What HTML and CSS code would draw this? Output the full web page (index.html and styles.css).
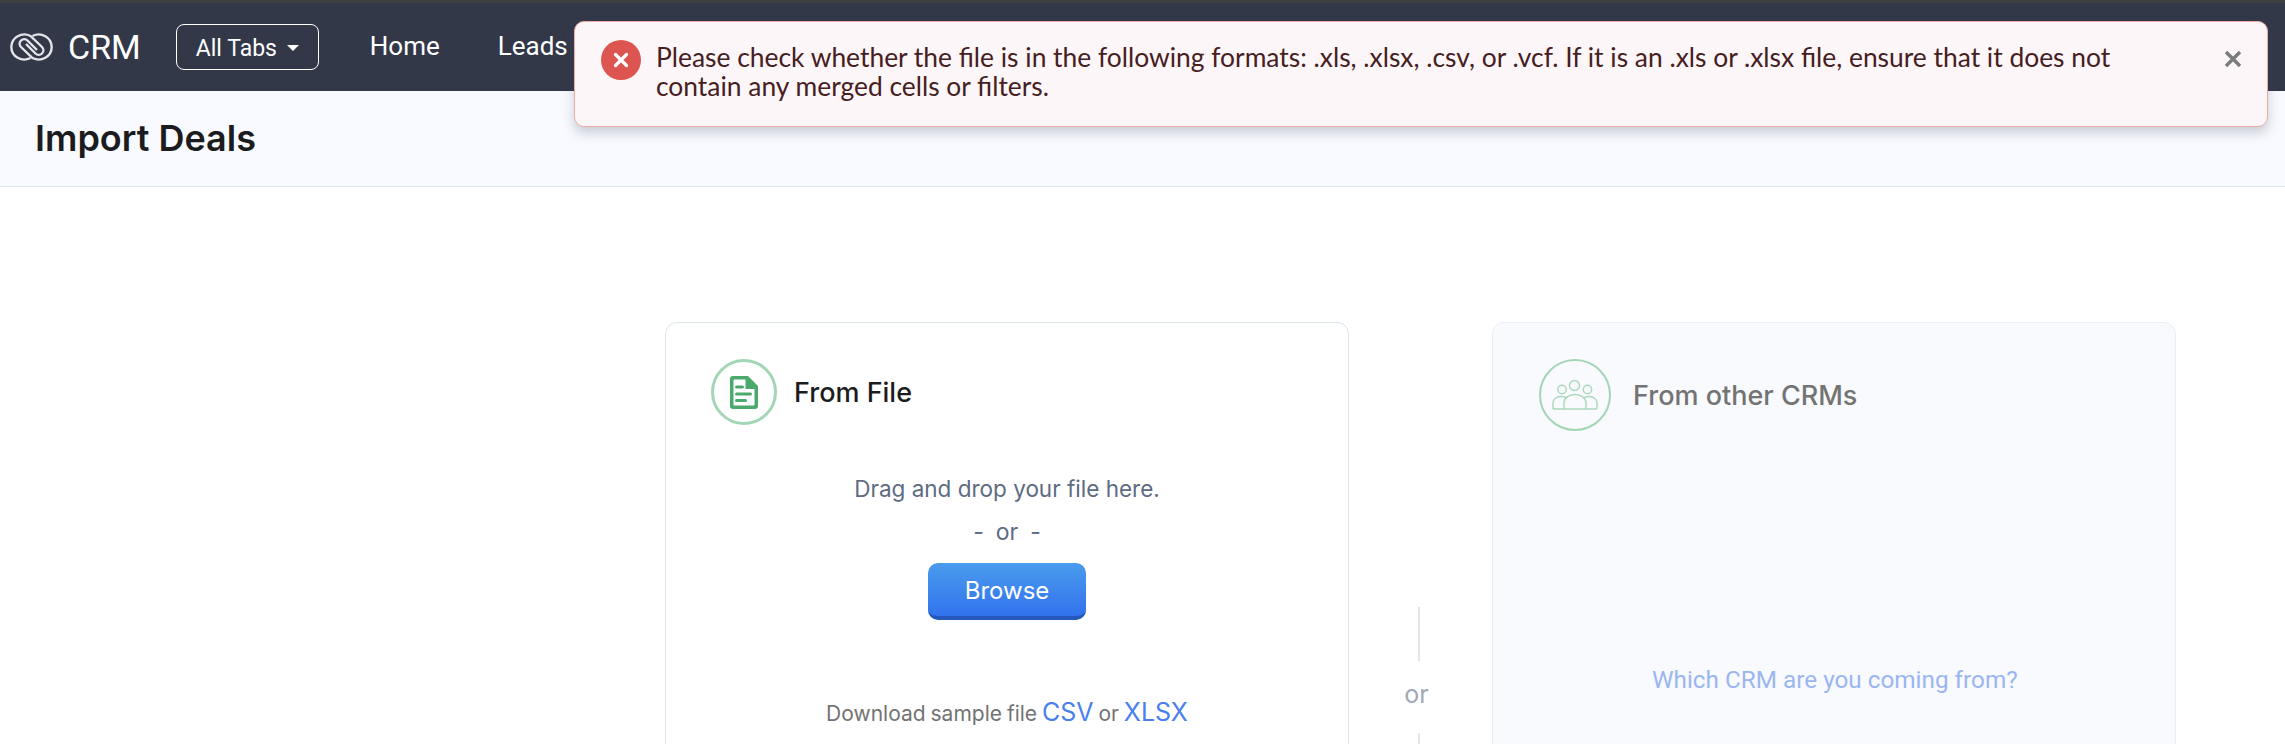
FILE: index.html
```html
<!DOCTYPE html>
<html lang="en">

<head>
    <meta charset="UTF-8">
    <title>Import Deals</title>
    <link rel="stylesheet" href="styles.css">
</head>

<body>
    <nav class="topbar">
        <svg class="logo" viewBox="0 0 43 28" width="43" height="28" fill="none" stroke="#e4e5e8" stroke-width="2.4">
            <path d="M20.5 25a13 12.5 0 1 1 0-22L32 14a4.5 4.5 0 0 1-6.5 6.5L16 11" />
            <path d="M22.5 3a13 12.5 0 1 1 0 22L11 14a4.5 4.5 0 0 1 6.5-6.5L27 17" />
        </svg>
        <span class="brand">CRM</span>
        <button class="all-tabs">All Tabs <span class="caret"></span></button>
        <a class="nav-link" href="#">Home</a>
        <a class="nav-link" href="#">Leads</a>
    </nav>

    <header class="page-head">
        <h1>Import Deals</h1>
    </header>

    <!-- error toast sits over the nav and header -->
    <div class="toast">
        <span class="toast-icon">
            <svg viewBox="0 0 16 16" width="16" height="16" stroke="#fff" stroke-width="3.2" stroke-linecap="round">
                <path d="M2.5 2.5l11 11M13.5 2.5l-11 11" />
            </svg>
        </span>
        <p>Please check whether the file is in the following formats: .xls, .xlsx, .csv, or .vcf. If it is an .xls or .xlsx file, ensure that it does not contain any merged cells or filters.</p>
        <svg class="toast-close" viewBox="0 0 18 18" width="18" height="18" stroke="#7b7b7b" stroke-width="3.4">
            <path d="M2 2l14 14M16 2L2 16" />
        </svg>
    </div>

    <main class="import-row">
        <section class="card">
            <div class="card-title">
                <span class="circle">
                    <svg viewBox="0 0 28 33" width="28" height="33">
                        <path d="M3 0h15l10 10v20a3 3 0 0 1-3 3H3a3 3 0 0 1-3-3V3a3 3 0 0 1 3-3z" fill="#4aa96c" />
                        <path d="M4.500 3.500h11v9.500h9v15.500a1 1 0 0 1-1 1h-19a1 1 0 0 1-1-1v-24a1 1 0 0 1 1-1z" fill="#fff" />
                        <path d="M6.500 11h6M6.500 18h14M6.500 24.500h9" stroke="#4aa96c" stroke-width="3" stroke-linecap="round" />
                    </svg>
                </span>
                <h2>From File</h2>
            </div>
            <div class="drop-area">
                <p class="drag">Drag and drop your file here.</p>
                <p class="or-small"><span>-</span>or<span>-</span></p>
                <button class="browse">Browse</button>
                <p class="sample">Download sample file <a href="#">CSV</a> or <a href="#">XLSX</a></p>
            </div>
        </section>

        <div class="or-col">
            <div class="line"></div>
            <span>or</span>
            <div class="line"></div>
        </div>

        <section class="card card-off">
            <div class="card-title">
                <span class="circle circle-thin">
                    <svg viewBox="0 0 46 30" width="46" height="30" fill="none" stroke="#a9d8bb" stroke-width="1.4">
                        <circle cx="10" cy="9.500" r="4.200" />
                        <circle cx="22.500" cy="5.500" r="5" />
                        <circle cx="35.500" cy="9.500" r="4.200" />
                        <path d="M1 29v-6c0-4 3.500-6.500 8-6.500 2 0 3.600.4 5 1.200" />
                        <path d="M45 29v-6c0-4-3.500-6.500-8-6.500-2 0-3.600.4-5 1.200" />
                        <path d="M12 29v-6c0-5 5-8.500 11-8.500S34 18 34 23v6" />
                        <path d="M1 29h44" />
                    </svg>
                </span>
                <h2>From other CRMs</h2>
            </div>
            <p class="which">Which CRM are you coming from?</p>
        </section>
    </main>
</body>

</html>
```

FILE: styles.css
```css
html,
body {
    height: 744px;
    overflow: hidden;
}

body {
    position: relative;
    margin: 0;
    padding: 0;
    font-family: Inter, "Liberation Sans", sans-serif;
    background-color: #fff;
}

h1,
h2,
p {
    margin: 0;
    font-weight: 500;
}

.topbar {
    display: flex;
    align-items: center;
    height: 88px;
    padding-left: 10px;
    border-top: 3px solid #3f4041;
    background-color: #333849;
    color: #fff;
}

.brand {
    margin-left: 15px;
    font-size: 34px;
    font-family: Roboto, sans-serif;
}

.all-tabs {
    display: flex;
    align-items: center;
    width: 143px;
    height: 46px;
    margin-left: 35px;
    padding: 2px 0 0 19px;
    background: none;
    border: 1px solid #fff;
    border-radius: 8px;
    color: #fff;
    font-family: Roboto, sans-serif;
    font-size: 23px;
}

.caret {
    margin-left: 10px;
    border-left: 6px solid transparent;
    border-right: 6px solid transparent;
    border-top: 6px solid #fff;
}

.nav-link {
    margin: 0 0 2px 51px;
    color: #fff;
    text-decoration: none;
    font-family: Roboto, sans-serif;
    font-size: 26px;
}

.nav-link + .nav-link {
    margin-left: 58px;
}

.page-head {
    display: flex;
    align-items: center;
    height: 96px;
    padding: 0 0 2px 35px;
    box-sizing: border-box;
    background-color: #f9faff;
    border-bottom: 1px solid #dce3ef;
}

.page-head h1 {
    color: #1c1c1e;
    font-size: 36px;
    font-weight: 600;
}

.toast {
    position: absolute;
    top: 21px;
    left: 574px;
    box-sizing: border-box;
    display: flex;
    width: 1694px;
    height: 106px;
    padding: 18px 0 0 26px;
    background-color: #fdf6f8;
    border: 1px solid #ecaca3;
    border-radius: 10px;
    box-shadow: 0 6px 12px rgba(60, 70, 90, 0.25);
}

.toast-icon {
    display: flex;
    align-items: center;
    justify-content: center;
    flex-shrink: 0;
    width: 40px;
    height: 40px;
    background-color: #dc5550;
    border-radius: 50%;
}

.toast p {
    width: 1480px;
    margin: 3px 0 0 15px;
    color: #45201f;
    font-family: Lato, sans-serif;
    font-size: 26.400px;
    font-weight: 400;
    line-height: 29px;
}

.toast-close {
    margin: 10px 0 0 88px;
}

.import-row {
    display: flex;
    margin: 135px 0 0 665px;
}

.card {
    box-sizing: border-box;
    width: 684px;
    height: 600px;
    padding: 36px 0 0 45px;
    background-color: #fff;
    border: 1px solid #dbe3f0;
    border-radius: 12px;
}

.card-off {
    padding-left: 46px;
    background-color: #f9fafe;
    border-color: #eceef5;
}

.card-title {
    display: flex;
    align-items: center;
}

.card-title h2 {
    margin-left: 17px;
    color: #1c1c1e;
    font-size: 27px;
}

.card-off .card-title h2 {
    margin-left: 22px;
    color: #737373;
}

.circle {
    display: flex;
    align-items: center;
    justify-content: center;
    box-sizing: border-box;
    width: 66px;
    height: 66px;
    border: 3px solid #a3d6b7;
    border-radius: 50%;
}

.circle-thin {
    width: 72px;
    height: 72px;
    border-width: 2px;
}

.drop-area {
    margin: 50px 0 0 -45px;
    text-align: center;
}

.drag {
    color: #5d6b82;
    font-size: 22.500px;
    font-weight: 400;
}

.or-small {
    display: flex;
    justify-content: center;
    gap: 12px;
    margin-top: 16px;
    color: #5d6b82;
    font-size: 23px;
    font-weight: 400;
}

.browse {
    width: 158px;
    height: 57px;
    margin-top: 17px;
    padding-top: 3px;
    background: linear-gradient(#4a9ced, #3272ed);
    border: none;
    border-bottom: 4px solid #2458bb;
    border-radius: 10px;
    color: #fff;
    font-family: Inter, sans-serif;
    font-size: 24px;
}

.sample {
    margin-top: 77px;
    color: #737373;
    font-size: 21px;
    font-weight: 400;
    word-spacing: -1px;
}

.sample a {
    color: #4a7fee;
    text-decoration: none;
    font-size: 25px;
}

.or-col {
    display: flex;
    flex-direction: column;
    align-items: center;
    width: 143px;
    padding-top: 285px;
    color: #a2a8b6;
    font-size: 25px;
}

.or-col .line {
    flex-shrink: 0;
    width: 2px;
    height: 54px;
    margin-right: 3px;
    background-color: #e4e5ee;
}

.or-col span {
    margin: 18px 8px 24px 0;
}

.which {
    margin: 234px 0 0 113px;
    color: #9ab6f2;
    font-family: Roboto, sans-serif;
    font-size: 24.300px;
    font-weight: 400;
}
```
